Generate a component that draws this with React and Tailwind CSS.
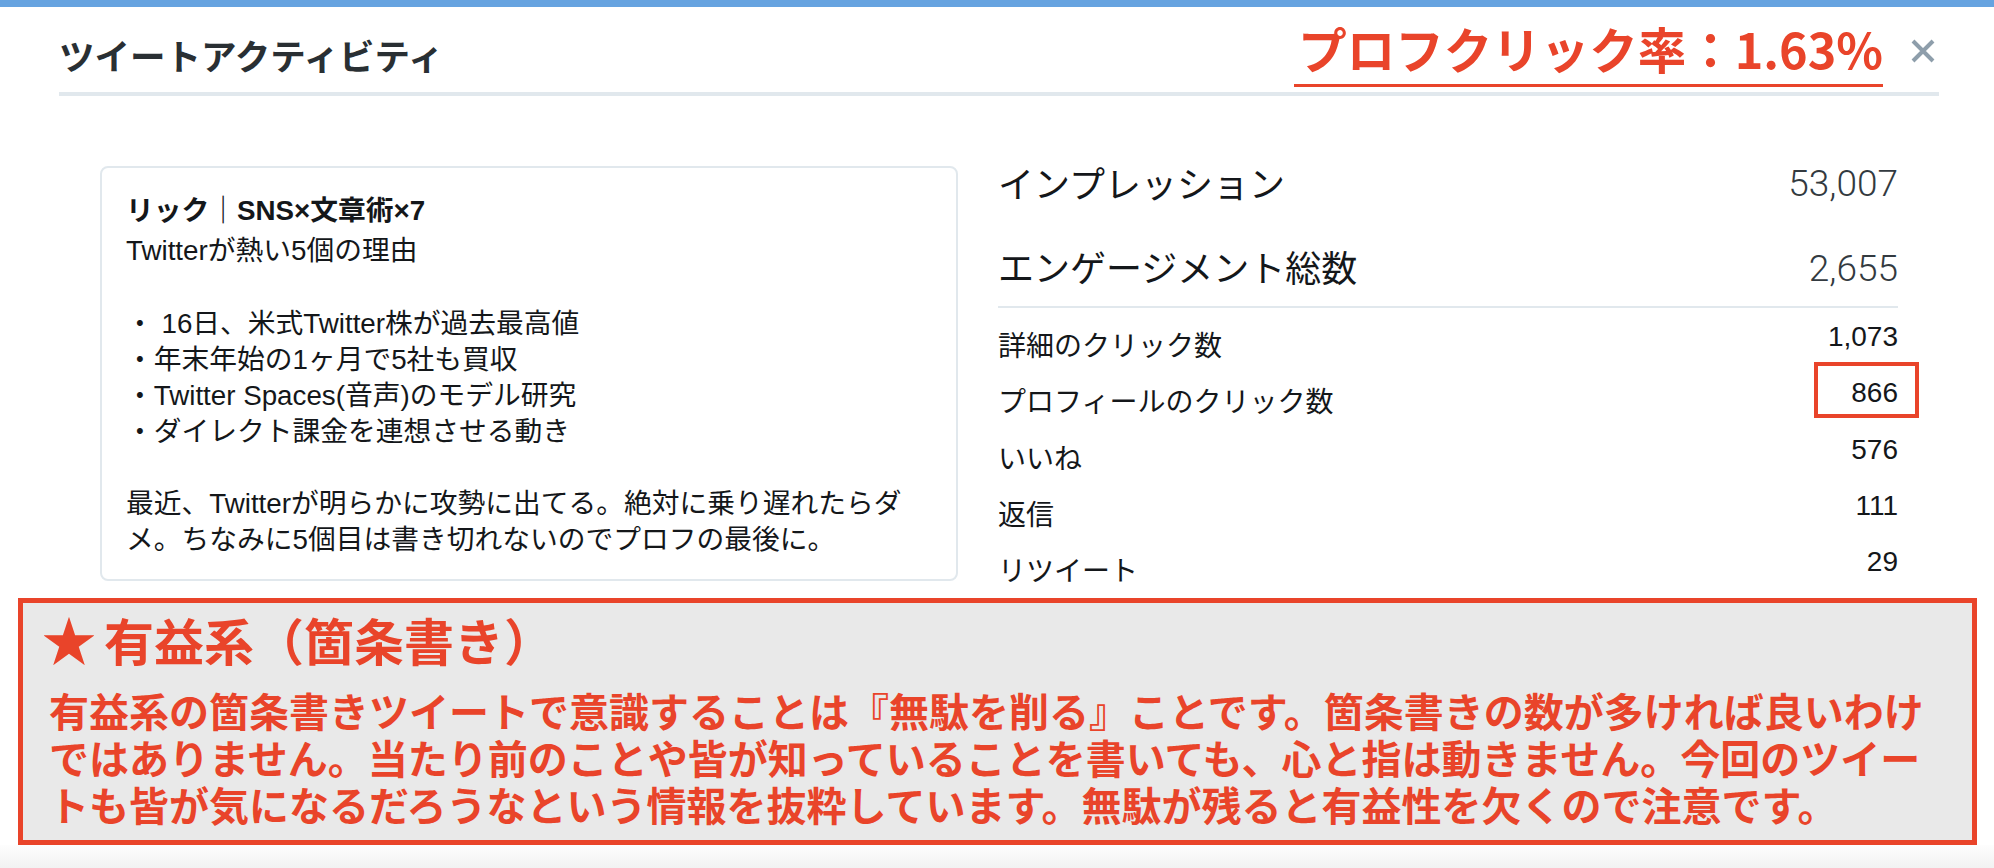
import React from "react";

const details = [
  { label: "詳細のクリック数", value: "1,073" },
  { label: "プロフィールのクリック数", value: "866", marked: true },
  { label: "いいね", value: "576" },
  { label: "返信", value: "111" },
  { label: "リツイート", value: "29" },
];

const CloseIcon = () => (
  <svg width="24" height="24" viewBox="0 0 24 24" fill="none">
    <path d="M2 2L22 22M22 2L2 22" stroke="#8e9eab" strokeWidth="4" />
  </svg>
);

const App = () => {
  return (
    <div className="w-[1994px] h-[868px] overflow-hidden bg-white font-['Noto_Sans_CJK_JP',sans-serif]">
      <div className="h-[7px] bg-[#66a3e0]"></div>

      {/* ヘッダー */}
      <header className="ml-[59px] w-[1880px] h-[85px] flex items-start">
        <h1 className="mt-[30px] text-[35.5px] leading-none font-bold text-[#292f33]">
          ツイートアクティビティ
        </h1>
        <div className="ml-auto mt-[17px] pl-[4px] pb-[11px] border-b-[3px] border-[#e9442a] text-[48.5px] leading-none font-bold text-[#e9442a]">
          プロフクリック率：1.63%
        </div>
        <button className="mt-[32px] ml-[28px] mr-[4px]">
          <CloseIcon />
        </button>
      </header>
      <div className="ml-[59px] w-[1880px] h-[4px] bg-[#e1e8ed]"></div>

      {/* ツイートと数値 */}
      <div className="h-[502px] flex items-start pl-[100px]">
        <div className="mt-[70px] w-[858px] h-[415px] border-2 border-[#e1e8ed] rounded-[8px] pl-[24px] pt-[25px] text-[27.75px] leading-[36px] text-[#14171a] font-['Liberation_Sans','Noto_Sans_CJK_JP',sans-serif]">
          <p className="font-bold mb-[4px]">リック｜SNS×文章術×7</p>
          <p>Twitterが熱い5個の理由</p>
          <p className="mt-[37px]">
            ・ 16日、米式Twitter株が過去最高値
            <br />
            ・年末年始の1ヶ月で5社も買収
            <br />
            ・Twitter Spaces(音声)のモデル研究
            <br />
            ・ダイレクト課金を連想させる動き
          </p>
          <p className="mt-[36px] whitespace-nowrap">
            最近、Twitterが明らかに攻勢に出てる。絶対に乗り遅れたらダ
            <br />
            メ。ちなみに5個目は書き切れないのでプロフの最後に。
          </p>
        </div>

        <div className="ml-[40px] mt-[68px] w-[900px] text-[#14171a]">
          <div className="h-[35px] flex justify-between items-start">
            <span className="text-[36px] leading-none">インプレッション</span>
            <span className="mt-[1px] text-[37px] leading-none font-light text-[#333a40] font-['Roboto',sans-serif]">
              53,007
            </span>
          </div>
          <div className="mt-[49px] h-[35px] flex justify-between items-start">
            <span className="text-[36px] leading-none">エンゲージメント総数</span>
            <span className="mt-[2px] text-[37px] leading-none font-light text-[#333a40] font-['Roboto',sans-serif]">
              2,655
            </span>
          </div>
          <div className="mt-[23px] h-[2px] bg-[#e1e8ed]"></div>
          <div className="mt-[15px]">
            {details.map((row) => (
              <div key={row.label} className="h-[56.25px] last:h-[36px] flex justify-between items-start">
                <span className="mt-[7px] text-[28px] leading-none">{row.label}</span>
                <span className="relative text-[28px] leading-none font-['Liberation_Sans',sans-serif]">
                  {row.value}
                  {row.marked && (
                    <span className="absolute -top-[17px] -right-[21px] w-[105px] h-[56px] border-[4px] border-[#e9442a]"></span>
                  )}
                </span>
              </div>
            ))}
          </div>
        </div>
      </div>

      {/* 解説 */}
      <div className="ml-[18px] w-[1959px] h-[247px] border-[5px] border-[#e9442a] bg-[#e9e9e9] pl-[19px] pt-[13px] font-bold text-[#e9442a]">
        <div className="h-[46px] flex items-center">
          <span className="text-[54px] leading-none">★</span>
          <span className="ml-[8px] text-[50px] leading-none">有益系（箇条書き）</span>
        </div>
        <p className="mt-[25px] pl-[7px] text-[40px] leading-[47px] whitespace-nowrap">
          有益系の箇条書きツイートで意識することは『無駄を削る』ことです。箇条書きの数が多ければ良いわけ
          <br />
          ではありません。当たり前のことや皆が知っていることを書いても、心と指は動きません。今回のツイー
          <br />
          トも皆が気になるだろうなという情報を抜粋しています。無駄が残ると有益性を欠くので注意です。
        </p>
      </div>
      <div className="h-[23px] bg-linear-to-b from-[#fdfdfd] to-[#f2f2f2]"></div>
    </div>
  );
};

export default App;
